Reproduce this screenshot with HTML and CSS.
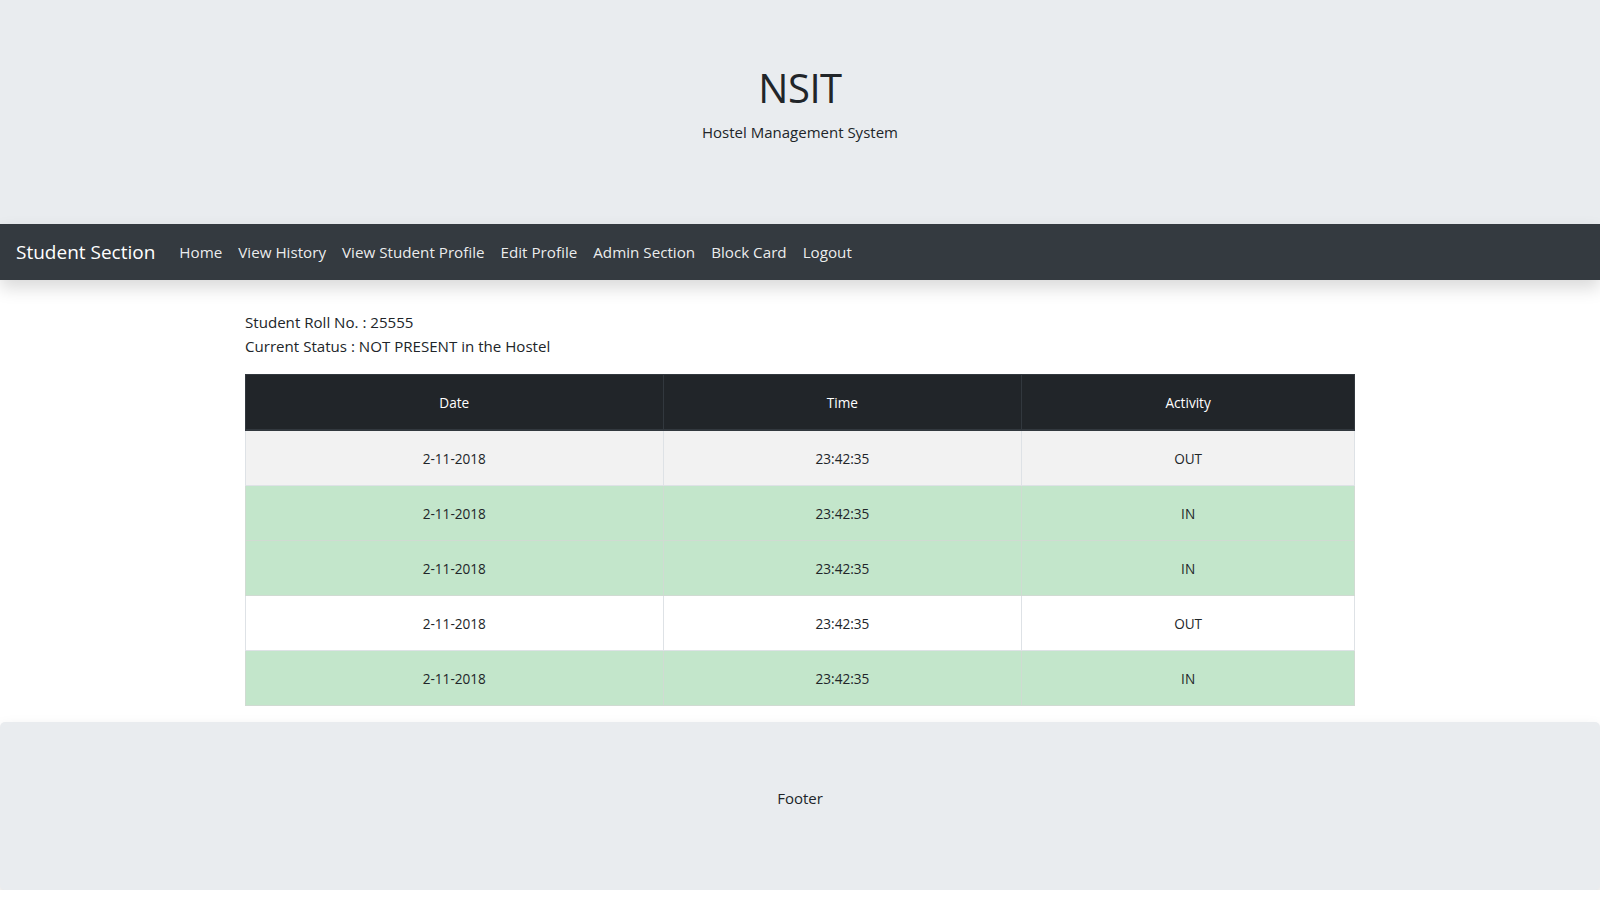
FILE: index.html
```html
<!DOCTYPE html>
<html lang="en">
<head>
<meta charset="utf-8">
<title>NSIT Hostel Management System</title>
<link rel="stylesheet" href="styles.css">
</head>
<body>
<header class="jumbotron">
  <h1 class="title">NSIT</h1>
  <p class="subtitle">Hostel Management System</p>
</header>
<nav class="navbar">
  <a class="brand" href="#">Student Section</a>
  <ul class="nav">
    <li><a href="#">Home</a></li>
    <li><a href="#">View History</a></li>
    <li><a href="#">View Student Profile</a></li>
    <li><a href="#">Edit Profile</a></li>
    <li><a href="#">Admin Section</a></li>
    <li><a href="#">Block Card</a></li>
    <li><a href="#">Logout</a></li>
  </ul>
</nav>
<main class="container">
  <div class="info">
    <div>Student Roll No. : 25555</div>
    <div>Current Status : NOT PRESENT in the Hostel</div>
  </div>
  <table class="history">
    <colgroup>
      <col class="c-date">
      <col class="c-time">
      <col class="c-act">
    </colgroup>
    <thead>
      <tr><th>Date</th><th>Time</th><th>Activity</th></tr>
    </thead>
    <tbody>
      <tr class="out"><td>2-11-2018</td><td>23:42:35</td><td>OUT</td></tr>
      <tr class="in"><td>2-11-2018</td><td>23:42:35</td><td>IN</td></tr>
      <tr class="in"><td>2-11-2018</td><td>23:42:35</td><td>IN</td></tr>
      <tr class="plain"><td>2-11-2018</td><td>23:42:35</td><td>OUT</td></tr>
      <tr class="in"><td>2-11-2018</td><td>23:42:35</td><td>IN</td></tr>
    </tbody>
  </table>
</main>
<footer class="footer">
  <p>Footer</p>
</footer>
</body>
</html>
```

FILE: styles.css
```css
* { box-sizing: border-box; }
html, body { margin: 0; padding: 0; }
body {
  font-family: "Open Sans", "Noto Sans", "Liberation Sans", sans-serif;
  font-size: 16px;
  line-height: 1.5;
  color: #212529;
  background: #fff;
}
.jumbotron {
  background: #e9ecef;
  padding: 64px 32px;
  text-align: center;
}
.title {
  margin: 0 0 8px;
  font-size: 40px;
  font-weight: 400;
  line-height: 48px;
  letter-spacing: -0.5px;
}
.subtitle {
  margin: 0 0 16px;
  font-size: 15px;
  line-height: 24px;
}
.navbar {
  position: relative;
  z-index: 2;
  display: flex;
  align-items: center;
  height: 56px;
  padding: 8px 16px;
  background: #343a40;
  box-shadow: 0 8px 16px rgba(0,0,0,.15);
}
.brand {
  color: #fff;
  text-decoration: none;
  font-size: 19px;
  line-height: 30px;
  margin-right: 16px;
}
.nav {
  display: flex;
  list-style: none;
  margin: 0;
  padding: 0;
}
.nav a {
  display: block;
  padding: 8px 8px;
  color: rgba(255,255,255,.92);
  text-decoration: none;
  font-size: 15.2px;
  line-height: 24px;
}
.container {
  width: 1110px;
  margin: 0 auto;
  padding-top: 30px;
}
.info {
  margin-bottom: 16px;
  font-size: 15.1px;
  line-height: 24px;
}
.history {
  width: 100%;
  border-collapse: collapse;
  margin-bottom: 16px;
  font-size: 13.6px;
  text-align: center;
}
.c-date { width: 418px; }
.c-time { width: 359px; }
.c-act { width: 333px; }
.history th {
  background: #212529;
  color: #fff;
  font-weight: 400;
  padding: 17px 12px 16px;
  line-height: 21px;
  border: 1px solid #32383e;
  border-bottom-width: 2px;
}
.history td {
  padding: 16.5px 12px;
  line-height: 21px;
  border: 1px solid #dee2e6;
}
.history tr.out td { background: #f2f2f2; }
.history tr.in td { background: #c3e6cb; border-color: #d0dbd2; }
.history tr.plain td { background: #fff; }
.footer {
  background: #e9ecef;
  border-radius: 5px;
  padding: 64px 32px;
  text-align: center;
  box-shadow: 0 8px 16px rgba(0,0,0,.15);
}
.footer p {
  margin: 0 0 16px;
  font-size: 15px;
  line-height: 24px;
}
```
